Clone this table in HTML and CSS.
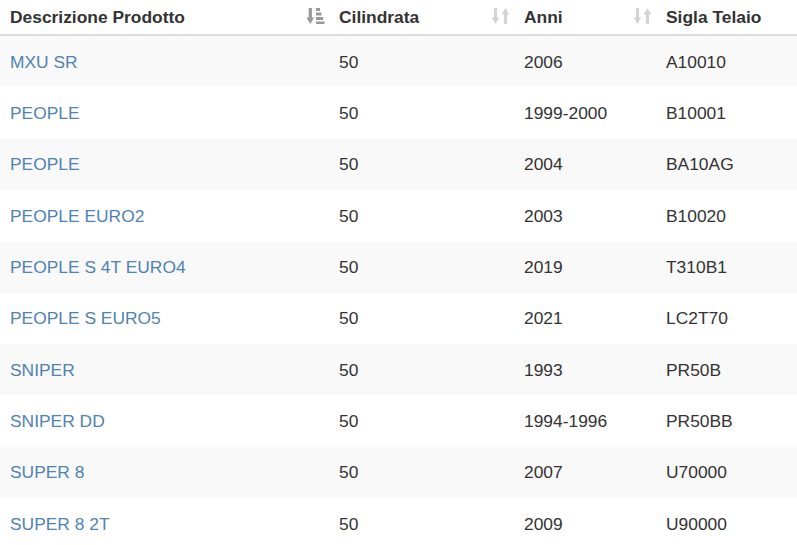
FILE: index.html
```html
<!DOCTYPE html>
<html lang="it">
<head>
<meta charset="utf-8">
<title>Prodotti</title>
<link rel="stylesheet" href="styles.css">
</head>
<body>
<table class="data-table">
  <colgroup>
    <col class="c1"><col class="c2"><col class="c3"><col class="c4">
  </colgroup>
  <thead>
    <tr>
      <th class="sortable">Descrizione Prodotto
        <svg class="sort-icon sorted" viewBox="0 0 18 18" aria-hidden="true">
          <rect x="2.2" y="1" width="3.2" height="11"/>
          <polygon points="0,10.5 7.6,10.5 3.8,17"/>
          <rect x="9.5" y="1" width="4" height="3"/>
          <rect x="9.5" y="5.5" width="5.5" height="3"/>
          <rect x="9.5" y="10" width="7" height="3"/>
          <rect x="9.5" y="14.5" width="8.5" height="2.5"/>
        </svg>
      </th>
      <th class="sortable">Cilindrata
        <svg class="sort-icon" viewBox="0 0 18 18" aria-hidden="true">
          <rect x="2.4" y="1" width="3.2" height="11"/>
          <polygon points="0.2,10.5 7.8,10.5 4,17"/>
          <rect x="12.4" y="6" width="3.2" height="11"/>
          <polygon points="10.2,7.5 17.8,7.5 14,1"/>
        </svg>
      </th>
      <th class="sortable">Anni
        <svg class="sort-icon" viewBox="0 0 18 18" aria-hidden="true">
          <rect x="2.4" y="1" width="3.2" height="11"/>
          <polygon points="0.2,10.5 7.8,10.5 4,17"/>
          <rect x="12.4" y="6" width="3.2" height="11"/>
          <polygon points="10.2,7.5 17.8,7.5 14,1"/>
        </svg>
      </th>
      <th>Sigla Telaio</th>
    </tr>
  </thead>
  <tbody>
    <tr><td><a href="#">MXU SR</a></td><td>50</td><td>2006</td><td>A10010</td></tr>
    <tr><td><a href="#">PEOPLE</a></td><td>50</td><td>1999-2000</td><td>B10001</td></tr>
    <tr><td><a href="#">PEOPLE</a></td><td>50</td><td>2004</td><td>BA10AG</td></tr>
    <tr><td><a href="#">PEOPLE EURO2</a></td><td>50</td><td>2003</td><td>B10020</td></tr>
    <tr><td><a href="#">PEOPLE S 4T EURO4</a></td><td>50</td><td>2019</td><td>T310B1</td></tr>
    <tr><td><a href="#">PEOPLE S EURO5</a></td><td>50</td><td>2021</td><td>LC2T70</td></tr>
    <tr><td><a href="#">SNIPER</a></td><td>50</td><td>1993</td><td>PR50B</td></tr>
    <tr><td><a href="#">SNIPER DD</a></td><td>50</td><td>1994-1996</td><td>PR50BB</td></tr>
    <tr><td><a href="#">SUPER 8</a></td><td>50</td><td>2007</td><td>U70000</td></tr>
    <tr><td><a href="#">SUPER 8 2T</a></td><td>50</td><td>2009</td><td>U90000</td></tr>
  </tbody>
</table>
</body>
</html>
```
FILE: styles.css
```css
html, body {
  margin: 0;
  padding: 0;
  background: #fff;
}
body {
  font-family: "Liberation Sans", Arial, sans-serif;
  font-size: 17.4px;
  color: #333;
  overflow: hidden;
}
.data-table {
  width: 797px;
  border-collapse: collapse;
  table-layout: fixed;
}
.c1 { width: 329px; }
.c2 { width: 185px; }
.c3 { width: 142px; }
.c4 { width: 141px; }
.data-table th {
  position: relative;
  text-align: left;
  font-weight: bold;
  height: 35px;
  padding: 0 10px 1px;
  box-sizing: border-box;
  line-height: 20px;
  border-bottom: 2px solid #ddd;
  vertical-align: middle;
}
.data-table td {
  padding: 0 10px;
  height: 51.33px;
  line-height: 20px;
  vertical-align: middle;
}
.data-table tbody tr:nth-child(odd) {
  background: #f9f9f9;
}
.data-table a {
  color: #4f83b3;
  text-decoration: none;
}
.sort-icon {
  position: absolute;
  right: 4px;
  top: 7px;
  width: 19px;
  height: 18px;
  fill: #d4d4d4;
}
.sort-icon.sorted {
  fill: #999;
}
```
